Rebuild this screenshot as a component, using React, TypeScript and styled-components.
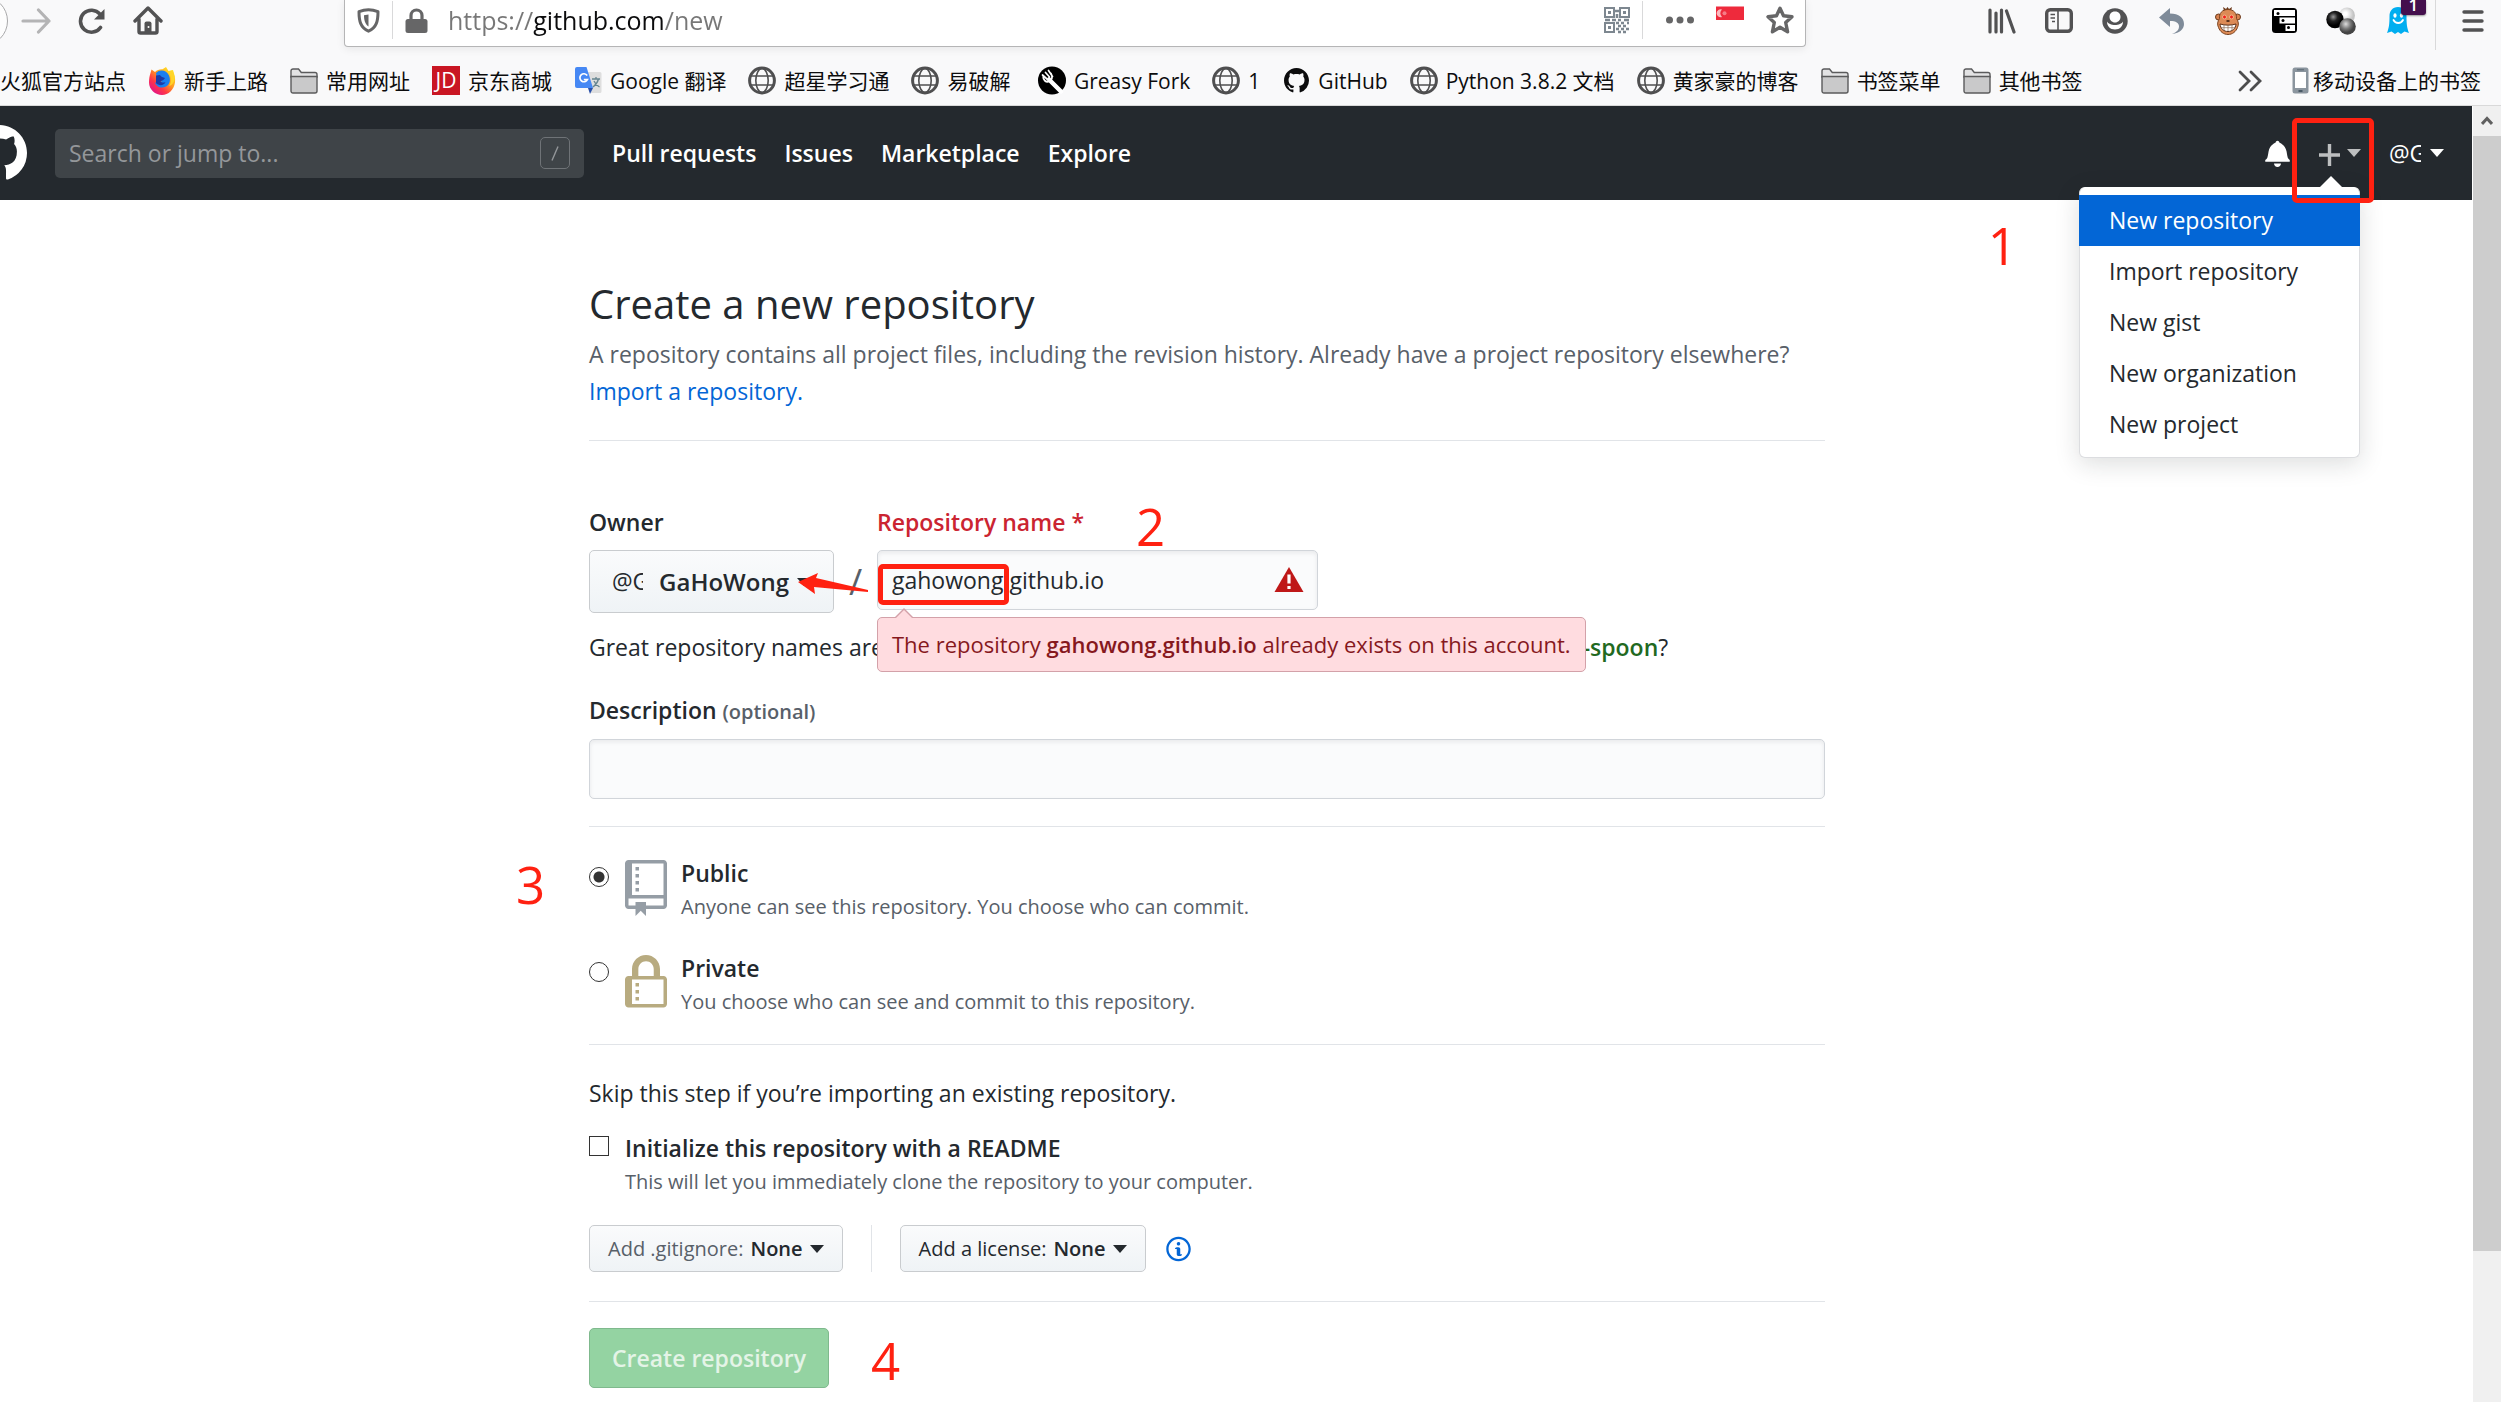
import React from "react";
import styled, { createGlobalStyle, css } from "styled-components";

const GlobalStyle = createGlobalStyle`
  *, *::before, *::after { box-sizing: border-box; }
  html, body { margin: 0; padding: 0; }
  body {
    background: #fff;
    color: #24292e;
    font-family: "Open Sans", "Noto Sans CJK SC", sans-serif;
    font-size: 23px;
    line-height: 37px;
    overflow: hidden;
  }
  button, input { font-family: inherit; font-size: inherit; line-height: inherit; color: inherit; margin: 0; }
  button { cursor: pointer; }
  a { color: inherit; text-decoration: none; }
  svg { display: block; flex: none; }
`;

const mark = "#ff2111";

/* ---------- shell ---------- */

const Window = styled.div`
  display: flex;
  flex-direction: column;
  height: 100vh;
  overflow: hidden;
`;

const Chrome = styled.div`
  flex: none;
  background: #f9f9fa;
  border-bottom: 1px solid #d9d9d9;
`;

const NavRow = styled.div`
  display: flex;
  align-items: flex-start;
  margin-bottom: 6px;
`;

const ButtonGroup = styled.div<{ $spread?: boolean }>`
  display: flex;
  align-items: center;
  justify-content: space-between;
  height: 41px;
  width: ${(p) => (p.$spread ? "452px" : "auto")};
`;

const ToolButton = styled.button<{ $narrow?: boolean }>`
  display: flex;
  align-items: center;
  justify-content: center;
  position: relative;
  width: ${(p) => (p.$narrow ? "50px" : "56px")};
  height: 41px;
  padding: 0;
  border: 0;
  background: none;
  color: #525253;
`;

const BackButton = styled.button`
  width: 50px;
  height: 50px;
  margin-left: -42px;
  padding: 0;
  border: 1px solid #a9a9aa;
  border-radius: 50%;
  background: #fdfdfd;
`;

const AddressBar = styled.div`
  flex: 1;
  display: flex;
  align-items: center;
  height: 47px;
  margin: 0 168px;
  padding: 0 0 6px 12px;
  background: #fff;
  border: 1px solid #b5b5b6;
  border-top: 0;
  border-radius: 0 0 4px 4px;
  box-shadow: 0 2px 8px rgba(0, 0, 0, 0.08);
`;

const Separator = styled.span<{ $tall?: boolean }>`
  flex: none;
  width: 1px;
  height: ${(p) => (p.$tall ? "50px" : "38px")};
  margin: 0 ${(p) => (p.$tall ? "9px" : "12px")};
  background: #d9d9da;
`;

const UrlInput = styled.input`
  flex: 1;
  min-width: 0;
  height: 38px;
  margin-left: 20px;
  padding: 0;
  border: 0;
  outline: 0;
  font-size: 25px;
  background: linear-gradient(to right, #777 85px, #0c0c0d 85px, #0c0c0d 217px, #777 217px);
  -webkit-background-clip: text;
  background-clip: text;
  -webkit-text-fill-color: transparent;
`;

const CountBadge = styled.span`
  position: absolute;
  top: 0;
  left: 31px;
  width: 25px;
  height: 15px;
  overflow: hidden;
  border-radius: 0 0 3px 3px;
  background: #440f4d;
  color: #fff;
  font-size: 17px;
  font-weight: 600;
  line-height: 10px;
  text-align: center;
  box-shadow: 0 1px 2px rgba(0, 0, 0, 0.4);
`;

const BookmarkRow = styled.nav`
  display: flex;
  align-items: center;
  height: 49px;
  gap: 22px;
  color: #0c0c0d;
  font-size: 21px;
  line-height: 30px;
  padding-right: 20px;
`;

const Bookmark = styled.a<{ $tight?: boolean }>`
  display: flex;
  align-items: center;
  gap: ${(p) => (p.$tight ? "4px" : "8px")};
  white-space: nowrap;
`;

const Favicon = styled.span`
  display: flex;
  justify-content: center;
  width: 28px;
`;

const Overflow = styled.button`
  display: flex;
  margin-left: auto;
  padding: 0 8px;
  border: 0;
  background: none;
  color: #4d4d4e;
`;

const JdMark = styled.span`
  width: 28px;
  height: 29px;
  background: #c91623;
  color: #fff;
  font-size: 21px;
  line-height: 28px;
  text-align: center;
`;

const Viewport = styled.div`
  flex: 1;
  min-height: 0;
  display: flex;
`;

const Page = styled.div`
  flex: 1;
  min-width: 0;
`;

const Scrollbar = styled.div`
  flex: none;
  display: flex;
  flex-direction: column;
  width: 29px;
  border-left: 1px solid #fff;
  background: #f0f0f0;
`;

const ScrollArrow = styled.div`
  display: flex;
  align-items: center;
  justify-content: center;
  height: 30px;
`;

const ScrollThumb = styled.div`
  height: 86%;
  background: #cdcdcd;
`;

/* ---------- site header ---------- */

const SiteHeader = styled.header`
  display: flex;
  align-items: center;
  height: 94px;
  padding-right: 28px;
  background: #24292e;
  color: #fff;
`;

const Logo = styled.a`
  margin: 0 28px 0 -29px;
`;

const SearchBox = styled.div`
  display: flex;
  align-items: center;
  width: 529px;
  height: 49px;
  padding: 0 14px;
  border-radius: 5px;
  background: #3f4448;
`;

const SearchInput = styled.input`
  flex: 1;
  min-width: 0;
  padding: 0;
  border: 0;
  outline: 0;
  background: none;
  &::placeholder { color: #94979a; opacity: 1; }
`;

const SlashKey = styled.span`
  display: flex;
  align-items: center;
  justify-content: center;
  width: 30px;
  height: 32px;
  border: 1px solid #6f7377;
  border-radius: 5px;
  color: #94979a;
`;

const SiteNav = styled.nav`
  display: flex;
  gap: 28px;
  margin-left: 28px;
  font-weight: 600;
`;

const HeaderTools = styled.div`
  display: flex;
  align-items: center;
  margin-left: auto;
`;

const HeaderButton = styled.button`
  display: flex;
  align-items: center;
  gap: 7px;
  padding: 0;
  border: 0;
  background: none;
  color: #fff;
`;

const Caret = styled.span<{ $color?: string }>`
  flex: none;
  display: inline-block;
  width: 0;
  height: 0;
  border: 7px solid transparent;
  border-top-color: ${(p) => p.$color || "currentColor"};
  border-top-width: 8px;
  border-bottom: 0;
`;

const AvatarAlt = styled.span`
  width: 32px;
  margin-right: 2px;
  overflow: hidden;
  white-space: nowrap;
  text-align: left;
`;

const CreateWrap = styled.div`
  position: relative;
  margin: 0 28px 0 29px;
`;

const Menu = styled.ul`
  position: absolute;
  z-index: 2;
  top: 52px;
  right: 1px;
  width: 281px;
  margin: 0;
  padding: 7px 0;
  list-style: none;
  background: #fff;
  border: 1px solid #dcdde0;
  border-top-color: #fff;
  border-radius: 6px;
  box-shadow: 0 6px 24px rgba(27, 31, 35, 0.15);
  color: #24292e;
  &::before {
    content: "";
    position: absolute;
    top: -12px;
    right: 16px;
    border: 12px solid transparent;
    border-top: 0;
    border-bottom-color: #fff;
  }
`;

const MenuLink = styled.a<{ $active?: boolean }>`
  display: block;
  padding: 7px 29px;
  ${(p) => p.$active && css`background: #0366d6; color: #fff; margin: 0 -1px; padding: 7px 30px;`}
`;

const Highlight = styled.span<{ $w: number; $h: number }>`
  position: absolute;
  z-index: 3;
  width: ${(p) => p.$w}px;
  height: ${(p) => p.$h}px;
  border: 5px solid ${mark};
  border-radius: 5px;
  pointer-events: none;
`;

const PlusHighlight = styled(Highlight)`
  top: -17px;
  left: -27px;
`;

const NameHighlight = styled(Highlight)`
  top: 14px;
  left: 1px;
`;

/* ---------- form ---------- */

const Main = styled.main`
  position: relative;
  padding: 74px 58px 0 0;
`;

const Content = styled.form`
  position: relative;
  max-width: 1236px;
  margin: 0 auto;
`;

const Title = styled.h1`
  margin: 0;
  font-size: 40px;
  font-weight: 400;
  line-height: 60px;
`;

const Lead = styled.p`
  margin: 2px 0 30px;
  color: #586069;
  a { color: #0366d6; }
`;

const Rule = styled.hr<{ $before?: number; $after?: number }>`
  height: 1px;
  margin: ${(p) => p.$before ?? 0}px 0 ${(p) => p.$after ?? 28}px;
  border: 0;
  background: #e1e4e8;
`;

const FieldRow = styled.div`
  display: flex;
  align-items: flex-start;
`;

const Field = styled.div`
  position: relative;
  display: flex;
  flex-direction: column;
  gap: 9px;
`;

const Label = styled.label<{ $error?: boolean }>`
  font-weight: 600;
  color: ${(p) => (p.$error ? "#cb2431" : "inherit")};
  small { font-size: 20px; color: #586069; }
`;

const Slash = styled.span`
  width: 43px;
  margin-top: 46px;
  padding-top: 13px;
  color: #586069;
  font-size: 36px;
  text-align: center;
`;

const greyButton = css`
  display: flex;
  align-items: center;
  border: 1px solid #c9cccf;
  border-radius: 5px;
  background: linear-gradient(#fafbfc, #eff3f6);
`;

const OwnerButton = styled.button`
  ${greyButton}
  width: 245px;
  height: 63px;
  padding: 0 22px;
  gap: 8px;
  b {
    margin-left: 6px;
    font-size: 24px;
    font-weight: 600;
  }
`;

const textBox = css`
  width: 100%;
  height: 60px;
  padding: 0 14px;
  border: 1px solid #d1d5da;
  border-radius: 5px;
  outline: 0;
  background: #fafbfc;
  box-shadow: inset 0 2px 4px rgba(27, 31, 35, 0.08);
`;

const NameBox = styled.div`
  position: relative;
  width: 441px;
`;

const TextInput = styled.input`
  ${textBox}
`;

const AlertSpot = styled.span`
  position: absolute;
  top: 16px;
  right: 14px;
`;

const ErrorTip = styled.div`
  position: absolute;
  z-index: 1;
  top: 113px;
  left: 0;
  padding: 8px 14px;
  border: 1px solid #d3a1a9;
  border-radius: 5px;
  background: #ffdce0;
  color: #86181d;
  font-size: 22px;
  white-space: nowrap;
  b { font-weight: 600; }
  &::before, &::after {
    content: "";
    position: absolute;
    left: 16px;
    top: -10px;
    border: 10px solid transparent;
    border-top: 0;
    border-bottom-color: #d3a1a9;
  }
  &::after { top: -8px; border-bottom-color: #ffdce0; }
`;

const Suggestion = styled.p`
  margin: 16px 0 26px;
  b { font-weight: 600; color: #22691f; }
`;

const Choices = styled.div`
  display: flex;
  flex-direction: column;
  gap: 28px;
  margin-bottom: 27px;
`;

const Choice = styled.div`
  display: flex;
  align-items: flex-start;
  gap: 16px;
`;

const ChoiceLabel = styled.label`
  display: flex;
  flex-direction: column;
  font-weight: 600;
`;

const Hint = styled.span`
  color: #586069;
  font-size: 20px;
  font-weight: 400;
  line-height: 30px;
`;

const Radio = styled.input`
  appearance: none;
  flex: none;
  width: 20px;
  height: 20px;
  margin-top: 12px;
  border: 1px solid #333;
  border-radius: 50%;
  background: #fff;
  &:checked { background: radial-gradient(circle, #333 5px, #fff 6px); }
`;

const Checkbox = styled.input`
  appearance: none;
  flex: none;
  width: 20px;
  height: 20px;
  margin-top: 6px;
  border: 1px solid #333;
  background: #fff;
`;

const ChoiceIcon = styled.span<{ $color: string }>`
  margin: 5px -2px 0 0;
  height: 56px;
  color: ${(p) => p.$color};
`;

const Note = styled.p`
  margin: 0 0 18px;
`;

const Options = styled.div`
  display: flex;
  align-items: center;
  gap: 28px;
  margin: 28px 0 29px;
`;

const OptionButton = styled.button<{ $muted?: boolean }>`
  ${greyButton}
  height: 47px;
  gap: 7px;
  padding: 0 18px;
  font-size: 20px;
  white-space: nowrap;
  span { color: ${(p) => (p.$muted ? "#586069" : "inherit")}; }
  b { font-weight: 600; }
`;

const OptionCaret = styled(Caret)`
  border-top-color: #24292e;
`;

const OptionSplit = styled.span`
  width: 1px;
  height: 47px;
  background: #e1e4e8;
`;

const InfoLink = styled.a`
  margin-left: -8px;
  color: #0366d6;
`;

const SubmitButton = styled.button`
  height: 60px;
  padding: 0 22px;
  border: 1px solid #7fb98d;
  border-radius: 5px;
  background: #94d3a2;
  color: #e4f4e7;
  font-weight: 600;
`;

const Step = styled.span<{ $x: number; $y: number }>`
  position: absolute;
  left: ${(p) => p.$x}px;
  top: ${(p) => p.$y}px;
  color: ${mark};
  font-size: 51px;
  line-height: 60px;
`;

const StepOne = styled(Step)`
  left: auto;
  right: 455px;
`;

const ArrowMark = styled.svg`
  position: absolute;
  z-index: 3;
  left: 209px;
  top: 65px;
`;

/* ---------- icons ---------- */

const Globe = () => (
  <svg width="28" height="29" viewBox="0 0 28 28" fill="none" stroke="#4f4f50">
    <circle cx="14" cy="14" r="12.4" strokeWidth="3" />
    <ellipse cx="14" cy="14" rx="6.2" ry="12" strokeWidth="1.6" />
    <path d="M2.5 9.5h23M2.5 18.5h23" strokeWidth="1.6" />
  </svg>
);

const Folder = () => (
  <svg width="28" height="26" viewBox="0 0 28 26" stroke="#5b5b5c" strokeWidth="1.4">
    <path d="M1 3a2 2 0 0 1 2-2h5.500l2.800 3.500H25a2 2 0 0 1 2 2V9H1z" fill="#e3e3e4" />
    <path d="M1 8.500h26V23a2 2 0 0 1-2 2H3a2 2 0 0 1-2-2z" fill="#c9c9ca" />
  </svg>
);

const Firefox = () => (
  <svg width="28" height="28" viewBox="0 0 28 28">
    <defs>
      <linearGradient id="fx" x1="0.85" y1="0.1" x2="0.15" y2="0.9">
        <stop offset="0" stopColor="#ffe226" />
        <stop offset="0.4" stopColor="#ff9a1f" />
        <stop offset="0.7" stopColor="#ff3647" />
        <stop offset="1" stopColor="#e31587" />
      </linearGradient>
    </defs>
    <path d="M2.500 6 3.500 2.500 7 5C9 3 12 2 14.500 2.300L18 0l2.500 4L25 3c1.500 5 2.500 8 2 12.500C26 22.500 20.500 28 14 28S1 22.500 1 15.500C1 12 1.500 9 2.500 6z" fill="url(#fx)" />
    <path d="M8 6c4-4.500 11-2.500 13 2.500s.5 9-3 11c-5 2.500-10 0-11-4l4.500.5c2-.5 2.500-2 1-3.500L9 12z" fill="#1b7ff0" />
    <path d="M8 8.500 12 8c1 2 3 2.500 5 3-1 2-3 2.500-4.500 3.500 1 1 3 1.500 5 .5-1.500 4-7 4-9.500 1z" fill="#1d3aa5" />
    <path d="M20 5c4 4 4 10 1 14 4-1 6-5 5.500-9.500C26 7 25 5 24.500 3.500 23 4 21 4 20 5z" fill="#ffd528" />
  </svg>
);

const Translate = () => (
  <svg width="27" height="28" viewBox="0 0 27 28">
    <path d="M11 5h14a1.500 1.500 0 0 1 1.500 1.500v18A1.500 1.500 0 0 1 25 26H16z" fill="#dedede" />
    <path d="M0 2a2 2 0 0 1 2-2h9.500l6.500 21H2a2 2 0 0 1-2-2z" fill="#4688f4" />
    <path d="M18 21h-5l2 6z" fill="#2a50a8" />
    <path d="M12.200 8.500a4 4 0 1 0 .3 4H8.800" fill="none" stroke="#fff" strokeWidth="1.700" />
    <path d="M17 12h8M21 10v2M23.500 12c-1 4-3 6-5.500 8M19 14c1 2.500 3 4.500 5.500 6" fill="none" stroke="#668590" strokeWidth="1.300" />
  </svg>
);

const Fork = () => (
  <svg width="28" height="29" viewBox="0 0 28 28">
    <circle cx="14" cy="14" r="14" fill="#000" />
    <path d="M11 13l12 12" stroke="#fff" strokeWidth="4.500" strokeLinecap="round" />
    <path d="M5 9c0 5 3 7 6 6s4-5 2-8M4.500 8.500 9 12.500M7.500 6l4 4.500M10.500 4l4 6" stroke="#fff" strokeWidth="1.700" fill="none" strokeLinecap="round" />
  </svg>
);

const catPath =
  "M8 0C3.58 0 0 3.58 0 8c0 3.54 2.29 6.53 5.47 7.59.4.07.55-.17.55-.38 0-.19-.01-.82-.01-1.49-2.01.37-2.53-.49-2.69-.94-.09-.23-.48-.94-.82-1.13-.28-.15-.68-.52-.01-.53.63-.01 1.08.58 1.23.82.72 1.21 1.87.87 2.33.66.07-.52.28-.87.51-1.07-1.78-.2-3.64-.89-3.64-3.95 0-.87.31-1.59.82-2.15-.08-.2-.36-1.02.08-2.12 0 0 .67-.21 2.2.82.64-.18 1.32-.27 2-.27.68 0 1.36.09 2 .27 1.53-1.04 2.2-.82 2.2-.82.44 1.1.16 1.92.08 2.12.51.56.82 1.27.82 2.15 0 3.07-1.87 3.75-3.65 3.95.29.25.54.73.54 1.48 0 1.07-.01 1.93-.01 2.2 0 .21.15.46.55.38A8.013 8.013 0 0016 8c0-4.42-3.58-8-8-8z";

const Cat = ({ size }: { size: number }) => (
  <svg width={size} height={size} viewBox="0 0 16 16" fill="currentColor">
    <path d={catPath} />
  </svg>
);

const Phone = () => (
  <svg width="17" height="27" viewBox="0 0 17 27">
    <rect x="0.500" y="0.500" width="16" height="26" rx="2.500" fill="#8b959e" />
    <rect x="3" y="5" width="11" height="16" fill="#fff" />
    <rect x="6.500" y="23" width="4" height="2" fill="#4a5a66" />
    <rect x="5" y="2" width="7" height="1.400" fill="#66737d" />
  </svg>
);

const QrCode = () => (
  <svg width="26" height="28" viewBox="0 0 26 28" fill="none" stroke="#7d8790" strokeWidth="2">
    <rect x="1" y="2" width="9" height="9" /><rect x="16" y="2" width="9" height="9" /><rect x="1" y="17" width="9" height="9" />
    <path d="M4 6.500h3M19 6.500h3M4 21.500h3" strokeWidth="3" />
    <path d="M11 5h4M13 8v4M1 14h5M8 14h4M14 14h3M20 14h5M12 17h3M17 17h3M23 17h2M14 20h3M19 20h3M12 23h3M17 23h3M22 23h3M14 26h3M19 26h3" strokeWidth="2.600" />
  </svg>
);

const Shield = () => (
  <svg width="23" height="25" viewBox="0 0 23 25" fill="none" stroke="#666667">
    <path d="M11.500 1.800c3.500 0 6.500.7 9.500 1.900 0 9.500-1.500 16-9.500 19.500C3.500 19.700 2 13.200 2 3.700c3-1.200 6-1.900 9.500-1.900z" strokeWidth="3" strokeLinejoin="round" />
    <path d="M11.500 6.500v12C8.500 16.500 7 13 7 7.300z" fill="#666667" stroke="none" />
  </svg>
);

const Padlock = () => (
  <svg width="23" height="25" viewBox="0 0 23 25">
    <path d="M6 12V7.500a5.500 5.500 0 0 1 11 0V12" fill="none" stroke="#666667" strokeWidth="3.200" />
    <rect x="0.500" y="11" width="22" height="14" rx="2.500" fill="#666667" />
  </svg>
);

const Star = () => (
  <svg width="28" height="28" viewBox="0 0 28 28" fill="none" stroke="#666667" strokeWidth="3.400" strokeLinejoin="round">
    <path d="M14 2.200l3.500 7.600 8.500 1-6.300 5.700 1.900 9.300-7.600-4.600-7.600 4.600 1.900-9.300L2 10.800l8.500-1z" />
  </svg>
);

const Flag = () => (
  <svg width="28" height="28" viewBox="0 0 28 28">
    <rect y="0.500" width="28" height="13.500" fill="#ee2a3c" />
    <path d="M6 3.500a4 4 0 1 0 0 7.500 5 5 0 0 1 0-7.500z" fill="#fbb9bf" />
    <circle cx="8.500" cy="7.300" r="2" fill="#f57c87" />
  </svg>
);

const Monkey = () => (
  <svg width="26" height="28" viewBox="0 0 26 28">
    <path d="M9 4 8 0l3 2 1.500-2L14 2l3-2-1 4z" fill="#6b3a1c" />
    <circle cx="3.500" cy="10" r="3" fill="#d88350" stroke="#6b3a1c" /><circle cx="22.500" cy="10" r="3" fill="#d88350" stroke="#6b3a1c" />
    <path d="M13 2.500c6 0 9 4 8.500 9 2 3 2.500 6 1 9-1.500 4-5 7-9.500 7S5 24.500 3.500 20.500c-1.500-3-1-6 1-9C4 6.500 7 2.500 13 2.500z" fill="#dc8a55" stroke="#7b4320" />
    <circle cx="9.500" cy="10" r="2" fill="#f3211b" stroke="#f0b48a" /><circle cx="16.500" cy="10" r="2" fill="#f3211b" stroke="#f0b48a" />
    <path d="M11.500 14h3" stroke="#3b1e10" strokeWidth="1.600" />
    <path d="M5 17c5 1.500 11 1.500 16 0-.5 5-4 7.500-8 7.500S5.500 22 5 17z" fill="#fff" stroke="#5d3018" />
    <path d="M9 18v5M13 18.200V24M17 18v5M6 20.700h14" stroke="#8b6a58" strokeWidth="0.700" />
  </svg>
);

const Tree = () => (
  <svg width="25" height="25" viewBox="0 0 25 25">
    <rect width="25" height="25" rx="3.500" fill="#000" />
    <path d="M2 2h21v6H2zM7.500 9.500H23v6H7.500zM13.500 17H23v6h-9.500z" fill="#fff" />
    <circle cx="6" cy="5.500" r="1.500" /><circle cx="11" cy="12.500" r="1.500" /><circle cx="16.500" cy="19.500" r="1.500" />
  </svg>
);

const Balls = () => (
  <svg width="30" height="28" viewBox="0 0 30 28">
    <defs>
      <radialGradient id="b1" cx="0.400" cy="0.350"><stop offset="0" stopColor="#999" /><stop offset="0.500" stopColor="#222" /><stop offset="1" /></radialGradient>
      <radialGradient id="b2" cx="0.400" cy="0.400"><stop offset="0.200" stopColor="#fff" /><stop offset="1" stopColor="#c4c4c4" /></radialGradient>
      <radialGradient id="b3" cx="0.400" cy="0.350"><stop offset="0" stopColor="#ddd" /><stop offset="0.600" stopColor="#777" /><stop offset="1" stopColor="#444" /></radialGradient>
    </defs>
    <circle cx="21" cy="8.500" r="8" fill="url(#b2)" />
    <circle cx="9" cy="12.500" r="8.700" fill="url(#b1)" />
    <circle cx="21.500" cy="19.500" r="8.300" fill="url(#b3)" />
  </svg>
);

const Ghost = () => (
  <svg width="22" height="27" viewBox="0 0 22 27">
    <path d="M11 0c5.500 0 8.500 4 8.500 9 0 8 .5 12 2.500 17l-4.500-1.500L14 27l-3-2-3 2-3.500-2.500L0 26c2-5 2.500-9 2.500-17C2.500 4 5.500 0 11 0z" fill="#00aef0" />
    <ellipse cx="8" cy="8.500" rx="1.600" ry="2.200" fill="#fff" /><ellipse cx="14.500" cy="8.500" rx="1.600" ry="2.200" fill="#fff" />
    <path d="M6.500 13c2 4 7.500 4 9.500 0" stroke="#fff" strokeWidth="1.800" fill="none" strokeLinecap="round" />
  </svg>
);

const bookmarks: { icon?: React.ReactNode; text: string }[] = [
  { text: "火狐官方站点" },
  { icon: <Firefox />, text: "新手上路" },
  { icon: <Folder />, text: "常用网址" },
  { icon: <JdMark>JD</JdMark>, text: "京东商城" },
  { icon: <Translate />, text: "Google 翻译" },
  { icon: <Globe />, text: "超星学习通" },
  { icon: <Globe />, text: "易破解\u00a0" },
  { icon: <Fork />, text: "Greasy Fork" },
  { icon: <Globe />, text: "1" },
  { icon: <Cat size={25} />, text: "GitHub" },
  { icon: <Globe />, text: "Python 3.8.2 文档" },
  { icon: <Globe />, text: "黄家豪的博客" },
  { icon: <Folder />, text: "书签菜单" },
  { icon: <Folder />, text: "其他书签" },
];

const menuItems = ["New repository", "Import repository", "New gist", "New organization", "New project"];

function BrowserChrome() {
  return (
    <Chrome>
      <NavRow>
        <ButtonGroup>
          <BackButton aria-label="Back" />
          <ToolButton aria-label="Forward">
            <svg width="30" height="26" viewBox="0 0 30 26" fill="none" stroke="#b4b4b5" strokeWidth="3.200" strokeLinecap="round" strokeLinejoin="round"><path d="M2 13h26M17.500 2 28 13 17.500 24" /></svg>
          </ToolButton>
          <ToolButton aria-label="Reload">
            <svg width="28" height="26" viewBox="0 0 28 26" fill="none" stroke="#525253" strokeWidth="3.600" strokeLinecap="round"><path d="M22.500 19.500A11 11 0 1 1 22 6.200" /><path d="M26.500 1v10.500H16z" fill="#525253" stroke="none" /></svg>
          </ToolButton>
          <ToolButton aria-label="Home">
            <svg width="30" height="29" viewBox="0 0 30 29" fill="none" stroke="#525253" strokeWidth="3.400" strokeLinejoin="round" strokeLinecap="round"><path d="M2 15 15 2l13 13M6 13v12.500a1.500 1.500 0 0 0 1.500 1.500h15a1.500 1.500 0 0 0 1.500-1.500V13" /><path d="M11.500 27V17.500a2 2 0 0 1 2-2h3a2 2 0 0 1 2 2V27z" fill="#525253" stroke="none" /><circle cx="15.500" cy="21" r="1" fill="#fff" stroke="none" /></svg>
          </ToolButton>
        </ButtonGroup>
        <AddressBar>
          <Shield />
          <Separator />
          <Padlock />
          <UrlInput aria-label="Address" defaultValue="https://github.com/new" />
          <QrCode />
          <Separator />
          <ToolButton $narrow aria-label="Page actions">
            <svg width="28" height="8" viewBox="0 0 28 8" fill="#666667"><circle cx="3.500" cy="4" r="3.500" /><circle cx="14" cy="4" r="3.500" /><circle cx="24.500" cy="4" r="3.500" /></svg>
          </ToolButton>
          <ToolButton $narrow aria-label="Site country"><Flag /></ToolButton>
          <ToolButton $narrow aria-label="Bookmark this page"><Star /></ToolButton>
        </AddressBar>
        <ButtonGroup $spread>
          <ToolButton aria-label="Library">
            <svg width="28" height="26" viewBox="0 0 28 26" stroke="#525253" strokeWidth="3.200" strokeLinecap="round"><path d="M2 2v22M8 5v19M13.500 2v22M18.500 3l7.500 21" /></svg>
          </ToolButton>
          <ToolButton aria-label="Sidebars">
            <svg width="28" height="25" viewBox="0 0 28 25" fill="none" stroke="#525253" strokeWidth="3.400"><rect x="1.700" y="1.700" width="24.600" height="21.600" rx="3.500" /><path d="M13 2v21" strokeWidth="1.600" /><path d="M5.500 6.500h4.500M5.500 10h4.500M7 13.500h3" strokeWidth="1.600" /></svg>
          </ToolButton>
          <ToolButton aria-label="Account">
            <svg width="26" height="26" viewBox="0 0 26 26"><circle cx="13" cy="13" r="12.700" fill="#525253" /><path d="M13 3.500c4 0 5.500 2.500 5.500 5.500S16 14.500 13 14.500 7.500 12 7.500 9 9 3.500 13 3.500z" fill="#fff" /><path d="M5 13.500c1 2 4.500 3.500 8 3.500s7-1.500 8-3.500c0 4.500-3 8-8 8s-8-3.500-8-8z" fill="#fff" /></svg>
          </ToolButton>
          <ToolButton aria-label="Undo">
            <svg width="26" height="26" viewBox="0 0 26 26" fill="#7f8b99"><path d="M0 9.500 11 0v5.500C20 5.500 25 10 25 16c0 5-4 9-12 10 5-2 7-4.500 7-7.500 0-3.500-3-5.500-9-5.500v6z" /></svg>
          </ToolButton>
          <ToolButton aria-label="Monkey scripts"><Monkey /></ToolButton>
          <ToolButton aria-label="Tab tree"><Tree /></ToolButton>
          <ToolButton aria-label="Proxy"><Balls /></ToolButton>
          <ToolButton aria-label="Tracker blocker"><Ghost /><CountBadge>1</CountBadge></ToolButton>
        </ButtonGroup>
        <Separator $tall />
        <ToolButton aria-label="Menu">
          <svg width="22" height="22" viewBox="0 0 22 22" stroke="#525253" strokeWidth="3.400" strokeLinecap="round"><path d="M2 2h18M2 11h18M2 20h18" /></svg>
        </ToolButton>
      </NavRow>
      <BookmarkRow aria-label="Bookmarks">
        {bookmarks.map((b) => (
          <Bookmark href="#" key={b.text}>
            {b.icon && <Favicon>{b.icon}</Favicon>}
            {b.text}
          </Bookmark>
        ))}
        <Overflow aria-label="More bookmarks">
          <svg width="24" height="22" viewBox="0 0 24 22" fill="none" stroke="currentColor" strokeWidth="2.800" strokeLinecap="round"><path d="M2 2l9 9-9 9M13 2l9 9-9 9" /></svg>
        </Overflow>
        <Bookmark href="#" $tight><Phone />移动设备上的书签</Bookmark>
      </BookmarkRow>
    </Chrome>
  );
}

function TopBar() {
  return (
    <SiteHeader>
      <Logo href="#" aria-label="GitHub"><Cat size={56} /></Logo>
      <SearchBox>
        <SearchInput aria-label="Search" placeholder="Search or jump to..." />
        <SlashKey>
          <svg width="8" height="15" viewBox="0 0 8 15" stroke="currentColor" strokeWidth="1.400"><path d="M1 14.500 7 .5" /></svg>
        </SlashKey>
      </SearchBox>
      <SiteNav>
        <a href="#">Pull requests</a>
        <a href="#">Issues</a>
        <a href="#">Marketplace</a>
        <a href="#">Explore</a>
      </SiteNav>
      <HeaderTools>
        <HeaderButton aria-label="Notifications">
          <svg width="25" height="28" viewBox="0 0 14 16" fill="currentColor"><path d="M14 12v1H0v-1l.73-.58c.77-.77.81-2.55 1.19-4.42C2.69 3.23 6 2 6 2c0-.55.45-1 1-1s1 .45 1 1c0 0 3.39 1.23 4.16 5 .38 1.88.42 3.66 1.19 4.42l.66.58H14zm-7 4c1.11 0 2-.89 2-2H5c0 1.11.89 2 2 2z" /></svg>
        </HeaderButton>
        <CreateWrap>
          <HeaderButton aria-label="Create new" aria-haspopup="menu">
            <svg width="21" height="37" viewBox="0 0 21 37" stroke="#bdbfc0" strokeWidth="3.400"><path d="M10.500 9v22M0 20h21" /></svg>
            <Caret $color="#bdbfc0" />
          </HeaderButton>
          <Menu>
            {menuItems.map((m, i) => (
              <li key={m}><MenuLink href="#" $active={i === 0}>{m}</MenuLink></li>
            ))}
          </Menu>
          <PlusHighlight $w={82} $h={85} />
        </CreateWrap>
        <HeaderButton aria-label="Account menu">
          <AvatarAlt>@GaHoWong</AvatarAlt>
          <Caret />
        </HeaderButton>
      </HeaderTools>
    </SiteHeader>
  );
}

export default function App() {
  return (
    <Window>
      <GlobalStyle />
      <BrowserChrome />
      <Viewport>
        <Page>
          <TopBar />
          <Main>
            <StepOne $x={0} $y={15}>1</StepOne>
            <Content onSubmit={(e) => e.preventDefault()}>
              <Title>Create a new repository</Title>
              <Lead>
                A repository contains all project files, including the revision history. Already have a project repository elsewhere?
                <br />
                <a href="#">Import a repository.</a>
              </Lead>
              <Rule $after={63} />
              <FieldRow>
                <Field>
                  <Label as="span" id="owner-label">Owner</Label>
                  <OwnerButton type="button" aria-labelledby="owner-label">
                    <AvatarAlt>@GaHoWong</AvatarAlt>
                    <b>GaHoWong</b>
                    <Caret />
                  </OwnerButton>
                  <ArrowMark width="72" height="30" viewBox="0 0 72 30" fill={mark}>
                    <path d="M0 13 20 4 18 9 70 21V23L16 18 17 25z" />
                  </ArrowMark>
                </Field>
                <Slash>/</Slash>
                <Field>
                  <Label $error htmlFor="repo-name">Repository name *</Label>
                  <NameBox>
                    <TextInput id="repo-name" defaultValue="gahowong.github.io" />
                    <AlertSpot>
                      <svg width="30" height="27" viewBox="0 0 30 27"><path d="M15 1 29.500 26H.5z" fill="#bf1818" /><path d="M13.400 8.500h3.200v9h-3.200zM13.400 20h3.200v3h-3.200z" fill="#fff" /></svg>
                    </AlertSpot>
                    <NameHighlight $w={131} $h={41} />
                  </NameBox>
                  <ErrorTip role="alert">
                    The repository <b>gahowong.github.io</b> already exists on this account.
                  </ErrorTip>
                </Field>
              </FieldRow>
              <Suggestion>
                Great repository names are short and memorable. Need inspiration? How about <b>cuddly-octo-spoon</b>?
              </Suggestion>
              <Field>
                <Label htmlFor="description">Description <small>(optional)</small></Label>
                <TextInput id="description" />
              </Field>
              <Rule $before={27} />
              <Choices>
                <Choice>
                  <Radio type="radio" name="visibility" id="public" defaultChecked />
                  <ChoiceIcon $color="#959da5">
                    <svg width="42" height="56" viewBox="0 0 12 16" fill="currentColor"><path d="M4 9H3V8h1v1zm0-3H3v1h1V6zm0-2H3v1h1V4zm0-2H3v1h1V2zm8-1v12c0 .55-.45 1-1 1H6v2l-1.500-1.500L3 16v-2H1c-.55 0-1-.45-1-1V1c0-.55.45-1 1-1h10c.55 0 1 .45 1 1zm-1 10H1v2h2v-1h3v1h5v-2zm0-10H2v9h9V1z" /></svg>
                  </ChoiceIcon>
                  <ChoiceLabel htmlFor="public">
                    Public
                    <Hint>Anyone can see this repository. You choose who can commit.</Hint>
                  </ChoiceLabel>
                </Choice>
                <Choice>
                  <Radio type="radio" name="visibility" id="private" />
                  <ChoiceIcon $color="#b8ab80">
                    <svg width="42" height="56" viewBox="0 0 12 16" fill="currentColor"><path d="M4 13H3v-1h1v1zm8-6v7c0 .55-.45 1-1 1H1c-.55 0-1-.45-1-1V7c0-.55.45-1 1-1h1V4c0-2.200 1.800-4 4-4s4 1.800 4 4v2h1c.55 0 1 .45 1 1zM3.800 6h4.410V4c0-1.220-.98-2.200-2.200-2.200-1.220 0-2.200.98-2.200 2.200v2H3.800zM11 7H2v7h9V7zM4 8H3v1h1V8zm0 2H3v1h1v-1z" /></svg>
                  </ChoiceIcon>
                  <ChoiceLabel htmlFor="private">
                    Private
                    <Hint>You choose who can see and commit to this repository.</Hint>
                  </ChoiceLabel>
                </Choice>
              </Choices>
              <Rule $after={30} />
              <Note>Skip this step if you’re importing an existing repository.</Note>
              <Choice>
                <Checkbox type="checkbox" id="readme" />
                <ChoiceLabel htmlFor="readme">
                  Initialize this repository with a README
                  <Hint>This will let you immediately clone the repository to your computer.</Hint>
                </ChoiceLabel>
              </Choice>
              <Options>
                <OptionButton type="button" $muted><span>Add .gitignore: </span><b>None</b><OptionCaret /></OptionButton>
                <OptionSplit />
                <OptionButton type="button"><span>Add a license: </span><b>None</b><OptionCaret /></OptionButton>
                <InfoLink href="#" aria-label="About licenses">
                  <svg width="25" height="28" viewBox="0 0 14 16" fill="currentColor"><path d="M6.300 5.690a.942.942 0 01-.28-.7c0-.28.09-.52.28-.7.19-.18.42-.28.7-.28.28 0 .52.09.7.28.18.19.28.42.28.7 0 .28-.09.52-.28.7a1 1 0 01-.7.3c-.28 0-.52-.11-.7-.3zM8 7.990c-.02-.25-.11-.48-.31-.69-.2-.19-.42-.3-.69-.31H6c-.27.02-.48.13-.69.31-.2.2-.3.44-.31.69h1v3c.02.27.11.5.31.69.2.2.42.31.69.31h1c.27 0 .48-.11.69-.31.2-.19.3-.42.31-.69H8V7.980v.01zM7 2.300c-3.140 0-5.700 2.540-5.700 5.680 0 3.140 2.560 5.700 5.700 5.700s5.700-2.550 5.700-5.700c0-3.150-2.560-5.690-5.700-5.690v.01zM7 .98c3.860 0 7 3.140 7 7s-3.140 7-7 7-7-3.120-7-7 3.140-7 7-7z" /></svg>
                </InfoLink>
              </Options>
              <Rule $after={26} />
              <SubmitButton type="submit">Create repository</SubmitButton>
              <Step $x={547} $y={222}>2</Step>
              <Step $x={-73} $y={580}>3</Step>
              <Step $x={282} $y={1056}>4</Step>
            </Content>
          </Main>
        </Page>
        <Scrollbar>
          <ScrollArrow>
            <svg width="12" height="10" viewBox="0 0 12 10" fill="none" stroke="#606060" strokeWidth="3"><path d="M1 8l5-5.500L11 8" /></svg>
          </ScrollArrow>
          <ScrollThumb />
        </Scrollbar>
      </Viewport>
    </Window>
  );
}
